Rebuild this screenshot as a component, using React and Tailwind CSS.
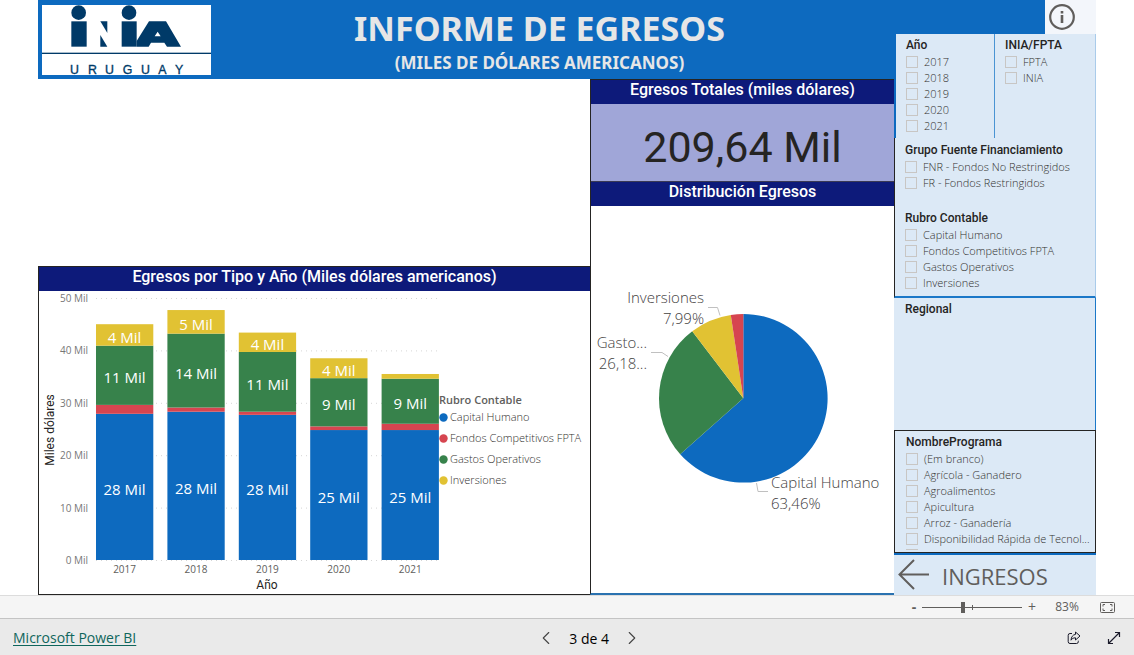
import React from "react";
import { ChevronLeft, ChevronRight } from "lucide-react";

const COLORS = {
  capital: "#0d6abf",
  fpta: "#d64550",
  gastos: "#37824b",
  inversiones: "#e1c233",
};

const legend = [
  { name: "Capital Humano", color: COLORS.capital },
  { name: "Fondos Competitivos FPTA", color: COLORS.fpta },
  { name: "Gastos Operativos", color: COLORS.gastos },
  { name: "Inversiones", color: COLORS.inversiones },
];

// values in miles de dólares
const years = [
  { year: "2017", capital: 27.9, fpta: 1.7, gastos: 11.3, inversiones: 4.1, labels: ["28 Mil", "11 Mil", "4 Mil"] },
  { year: "2018", capital: 28.3, fpta: 0.8, gastos: 14.1, inversiones: 4.5, labels: ["28 Mil", "14 Mil", "5 Mil"] },
  { year: "2019", capital: 27.7, fpta: 0.6, gastos: 11.4, inversiones: 3.7, labels: ["28 Mil", "11 Mil", "4 Mil"] },
  { year: "2020", capital: 24.8, fpta: 0.7, gastos: 9.2, inversiones: 3.8, labels: ["25 Mil", "9 Mil", "4 Mil"] },
  { year: "2021", capital: 24.8, fpta: 1.2, gastos: 8.6, inversiones: 0.9, labels: ["25 Mil", "9 Mil", ""] },
];

const pie = [
  { value: 63.46, color: COLORS.capital },
  { value: 26.18, color: COLORS.gastos },
  { value: 7.99, color: COLORS.inversiones },
  { value: 2.37, color: COLORS.fpta },
];

const programas = [
  "(Em branco)",
  "Agrícola - Ganadero",
  "Agroalimentos",
  "Apicultura",
  "Arroz - Ganadería",
  "Disponibilidad Rápida de Tecnol...",
  "Economía Aplicada",
];

const Logo = () => (
  <svg viewBox="36 14 507 210" className="w-[169px] h-[70px] bg-white shrink-0" role="img" aria-label="INIA Uruguay">
    <g fill="#003a68">
      <circle cx="146" cy="37" r="22" />
      <rect x="124" y="63" width="46" height="76" />
      <path d="M211 63h21v35z" />
      <path d="M211 104l21 35h-21z" />
      <circle cx="297" cy="37" r="22" />
      <rect x="275" y="63" width="45" height="76" />
      <path
        fillRule="evenodd"
        d="M320 122L357 63h51l45 76h-42l-8-12h-40l-7 12h-36zM383 94l-9 14h18z"
      />
      <rect x="36" y="157" width="507" height="4" />
      <text
        x="120 174 225 278 333 385 435"
        y="221"
        fontSize="37"
        stroke="#003a68"
        className="font-normal font-['Liberation_Sans',sans-serif]"
      >
        URUGUAY
      </text>
    </g>
  </svg>
);

const PanelTitle = ({ children }) => (
  <h2 className="h-6 bg-[#0d1a7a] text-white text-center text-[16px] leading-5 font-medium font-[Roboto,sans-serif] whitespace-nowrap">
    {children}
  </h2>
);

const BarChart = () => {
  const zero = 269;
  const scale = 5.24;
  return (
    <svg viewBox="0 0 400 303" className="flex-1 min-w-0" role="img" aria-label="Egresos por tipo y año">
      {[0, 10, 20, 30, 40, 50].map((tick) => (
        <g key={tick}>
          <line
            x1="57"
            x2="400"
            y1={zero - tick * scale + 0.5}
            y2={zero - tick * scale + 0.5}
            stroke="#d6d6d6"
            strokeDasharray="1 4"
          />
          <text x="49" y={zero - tick * scale + 4} textAnchor="end" fontSize="10" fill="#777777">
            {tick} Mil
          </text>
        </g>
      ))}
      {years.map((item, index) => {
        const x = 57 + index * 71.4;
        const center = x + 28.6;
        const capitalTop = zero - item.capital * scale;
        const fptaTop = capitalTop - item.fpta * scale;
        const gastosTop = fptaTop - item.gastos * scale;
        const invTop = gastosTop - item.inversiones * scale;
        return (
          <g key={item.year}>
            <rect x={x} y={capitalTop} width="57.3" height={zero - capitalTop} fill={COLORS.capital} />
            <rect x={x} y={fptaTop} width="57.3" height={capitalTop - fptaTop} fill={COLORS.fpta} />
            <rect x={x} y={gastosTop} width="57.3" height={fptaTop - gastosTop} fill={COLORS.gastos} />
            <rect x={x} y={invTop} width="57.3" height={gastosTop - invTop} fill={COLORS.inversiones} />
            <g fill="#ffffff" fontSize="15" textAnchor="middle">
              <text x={center} y={(zero + capitalTop) / 2 + 8}>{item.labels[0]}</text>
              <text x={center} y={(fptaTop + gastosTop) / 2 + 8}>{item.labels[1]}</text>
              <text x={center} y={(gastosTop + invTop) / 2 + 8}>{item.labels[2]}</text>
            </g>
            <text x={center} y="282" textAnchor="middle" fontSize="10" fill="#605e5c">
              {item.year}
            </text>
          </g>
        );
      })}
      <g fill="#252423" fontSize="12" textAnchor="middle" className="font-[Roboto,sans-serif]">
        <text x="228" y="298">Año</text>
        <text transform="translate(15 139) rotate(-90)">Miles dólares</text>
      </g>
    </svg>
  );
};

const PieChart = () => {
  const cx = 152.3;
  const cy = 192.3;
  const r = 84.3;
  const point = (percent) => {
    const angle = (percent / 100) * Math.PI * 2;
    return `${cx + r * Math.sin(angle)} ${cy - r * Math.cos(angle)}`;
  };
  let start = 0;
  return (
    <svg viewBox="0 0 303 387" className="w-full" role="img" aria-label="Distribución de egresos">
      {pie.map((slice) => {
        const from = start;
        start += slice.value;
        return (
          <path
            key={slice.color}
            d={`M${cx} ${cy}L${point(from)}A${r} ${r} 0 ${slice.value > 50 ? 1 : 0} 1 ${point(start)}Z`}
            fill={slice.color}
          />
        );
      })}
      <g fill="none" stroke="#c0c0c0">
        <path d="M117 101.5h9.5l2.5 8" />
        <path d="M60 146.5h11l6 4" />
        <path d="M165.5 277l1.5 8.5h10" />
      </g>
      <g fill="#44423f" fontSize="15" className="font-light">
        <g textAnchor="end">
          <text x="113" y="97">Inversiones</text>
          <text x="113" y="118">7,99%</text>
          <text x="56" y="142">Gasto...</text>
          <text x="56" y="163">26,18...</text>
        </g>
        <text x="180" y="282">Capital Humano</text>
        <text x="180" y="303">63,46%</text>
      </g>
    </svg>
  );
};

const Slicer = ({ title, options = [], className }) => (
  <section className={className}>
    <h3 className="text-[12px] leading-[17px] font-medium text-[#252423] font-[Roboto,sans-serif] whitespace-nowrap">
      {title}
    </h3>
    <div>
      {options.map((option) => (
        <label key={option} className="flex items-center gap-1.5 h-4 text-[11px] leading-4 font-light text-[#33312f] whitespace-nowrap">
          <input
            type="checkbox"
            className="appearance-none size-3 shrink-0 border border-[#c8c6c4] checked:bg-[#605e5c]"
          />
          {option}
        </label>
      ))}
    </div>
  </section>
);

const Sidebar = () => (
  <aside className="w-[202px] shrink-0 flex flex-col bg-[#dce9f6]">
    <div className="h-[34px] flex justify-end bg-[#0d6abf]">
      <button aria-label="Información" className="w-[51px] pl-1 bg-[#f3f6fb] cursor-pointer">
        <svg viewBox="0 0 26 26" className="size-[26px]" fill="none" stroke="#605e5c">
          <circle cx="13" cy="13" r="11.8" strokeWidth="2.2" />
          <path d="M13 11v8M13 7v2.5" strokeWidth="2.6" />
        </svg>
      </button>
    </div>
    <div className="flex h-[104px] border-l-2 border-[#0d6abf] border-r border-r-[#a9cbea]">
      <Slicer
        title="Año"
        options={["2017", "2018", "2019", "2020", "2021"]}
        className="w-[99px] pt-[3px] pl-2.5 border-r border-[#4a94d3]"
      />
      <Slicer title="INIA/FPTA" options={["FPTA", "INIA"]} className="flex-1 pt-[3px] pl-2.5" />
    </div>
    <Slicer
      title="Grupo Fuente Financiamiento"
      options={["FNR - Fondos No Restringidos", "FR - Fondos Restringidos"]}
      className="h-[68px] pt-1 pl-2.5 border-l border-l-[#252423] border-r border-r-[#a9cbea]"
    />
    <Slicer
      title="Rubro Contable"
      options={legend.map((item) => item.name)}
      className="h-[92px] pt-1 pl-2.5 border-l border-l-[#252423] border-r border-r-[#a9cbea] border-b-2 border-b-[#1b78c8]"
    />
    <Slicer title="Regional" className="h-[132px] pt-[3px] pl-[11px] border-r border-[#1b78c8]" />
    <Slicer
      title="NombrePrograma"
      options={programas}
      className="h-[123px] pt-[3px] pl-[11px] border border-[#252423] [&>div]:h-[99px] [&>div]:overflow-hidden"
    />
    <button className="h-[42px] flex items-center gap-3 pl-1 border-t-2 border-[#0d6abf] text-[22px] text-[#605e5c] cursor-pointer">
      <svg viewBox="0 0 32 32" className="size-8" fill="none" stroke="#605e5c" strokeWidth="2">
        <path d="M31 15.5H1.5M16 1L1.5 15.5L16 30" />
      </svg>
      <span className="pt-0.5">INGRESOS</span>
    </button>
  </aside>
);

const ZoomBar = () => (
  <div className="h-[23px] flex items-center justify-end pr-[19px] border-t border-[#dcdcdc] bg-[#f5f5f5] text-[#605e5c]">
    <button aria-label="Alejar" className="w-4 text-sm leading-4 font-bold cursor-pointer">-</button>
    <div className="relative w-[100px] h-3 flex items-center">
      <input
        type="range"
        aria-label="Zoom"
        defaultValue="41"
        className="appearance-none w-full h-px bg-[#605e5c] [&::-webkit-slider-thumb]:appearance-none [&::-webkit-slider-thumb]:w-1 [&::-webkit-slider-thumb]:h-[11px] [&::-webkit-slider-thumb]:bg-[#605e5c]"
      />
      <span className="absolute left-[50px] top-1 w-px h-[5px] bg-[#605e5c]" />
    </div>
    <button aria-label="Acercar" className="w-5 text-sm leading-4 cursor-pointer">+</button>
    <span className="w-[50px] text-center text-xs leading-4">83%</span>
    <button aria-label="Ajustar a la página" className="ml-2 cursor-pointer">
      <svg viewBox="0 0 15 11" className="w-[15px] h-[11px]" fill="none" stroke="#605e5c">
        <rect x="0.5" y="0.5" width="14" height="10" rx="1" />
        <path d="M3 4.5v-2h2M10 2.5h2v2M12 6.5v2h-2M5 8.5H3v-2" />
      </svg>
    </button>
  </div>
);

const Footer = () => (
  <footer className="h-[37px] flex items-center justify-between pt-0.5 pl-[13px] border-t border-[#c4c4c4] bg-[#eaeaea]">
    <a href="#" className="text-[14px] leading-5 text-[#0f665c] underline underline-offset-2">
      Microsoft Power BI
    </a>
    <nav className="flex items-center gap-3 text-[14px] font-medium text-black">
      <button aria-label="Página anterior" className="cursor-pointer">
        <ChevronLeft className="size-[22px] text-[#444444]" strokeWidth={1.2} />
      </button>
      <span>3 de 4</span>
      <button aria-label="Página siguiente" className="cursor-pointer">
        <ChevronRight className="size-[22px] text-[#444444]" strokeWidth={1.2} />
      </button>
    </nav>
    <div className="flex pl-3">
      <button aria-label="Compartir" className="w-10 flex justify-center cursor-pointer">
        <svg viewBox="0 0 14 14" className="size-3.5" fill="none" stroke="#1b1b2b" strokeLinejoin="round">
          <path d="M5 2.5H3a1.8 1.8 0 0 0-1.8 1.8v6.4A1.8 1.8 0 0 0 3 12.5h6.5a1.8 1.8 0 0 0 1.8-1.8v-1" />
          <path d="M8.5 1l4.5 4-4.5 4V6.8C6.2 6.8 4.9 7.7 4 9.2C4.2 6 5.8 3.7 8.5 3.4z" />
        </svg>
      </button>
      <button aria-label="Pantalla completa" className="w-10 flex justify-center cursor-pointer">
        <svg viewBox="0 0 14 14" className="size-3.5" fill="none" stroke="#1b1b2b" strokeWidth="1.2">
          <path d="M1.5 12.5l11-11M8 1.5h4.5V6M1.5 8v4.5H6" />
        </svg>
      </button>
    </div>
  </footer>
);

const App = () => {
  return (
    <div className="min-h-screen flex flex-col bg-white font-['Open_Sans',sans-serif]">
      <div className="flex-1 flex px-[38px]">
        <main className="flex-1 min-w-0 flex flex-col">
          <header className="h-[79px] flex items-center pl-1 pr-[26px] bg-[#0d6abf] text-[#e6e6e6] font-bold text-center font-['Noto_Sans',sans-serif]">
            <Logo />
            <div className="flex-1">
              <h1 className="text-[34px] leading-[46px]">INFORME DE EGRESOS</h1>
              <p className="text-[17px] leading-6">(MILES DE DÓLARES AMERICANOS)</p>
            </div>
          </header>
          <div className="flex-1 grid grid-cols-[552fr_304fr]">
            <section className="self-end border-t border-l border-b border-[#252423]">
              <PanelTitle>Egresos por Tipo y Año (Miles dólares americanos)</PanelTitle>
              <div className="flex">
                <BarChart />
                <div className="w-[151px] pt-[101px] text-[11px] text-[#605e5c] whitespace-nowrap">
                  <h3 className="leading-[15px] font-semibold">Rubro Contable</h3>
                  <ul className="font-light text-[#33312f]">
                    {legend.map((item) => (
                      <li key={item.name} className="flex items-center gap-0.5 h-[21px]">
                        <svg viewBox="0 0 9 9" className="size-[9px]">
                          <circle cx="4.5" cy="4.5" r="4.2" fill={item.color} />
                        </svg>
                        {item.name}
                      </li>
                    ))}
                  </ul>
                </div>
              </div>
            </section>
            <section className="border-t border-l border-[#252423] border-b-2 border-b-[#2a72b0]">
              <PanelTitle>Egresos Totales (miles dólares)</PanelTitle>
              <p className="h-[78px] pt-2 border-b border-[#3a3a55] bg-[#a0a6d8] text-center text-[43px] leading-[70px] text-[#252423] font-[Roboto,sans-serif]">
                209,64 Mil
              </p>
              <PanelTitle>Distribución Egresos</PanelTitle>
              <PieChart />
            </section>
          </div>
        </main>
        <Sidebar />
      </div>
      <ZoomBar />
      <Footer />
    </div>
  );
};

export default App;
